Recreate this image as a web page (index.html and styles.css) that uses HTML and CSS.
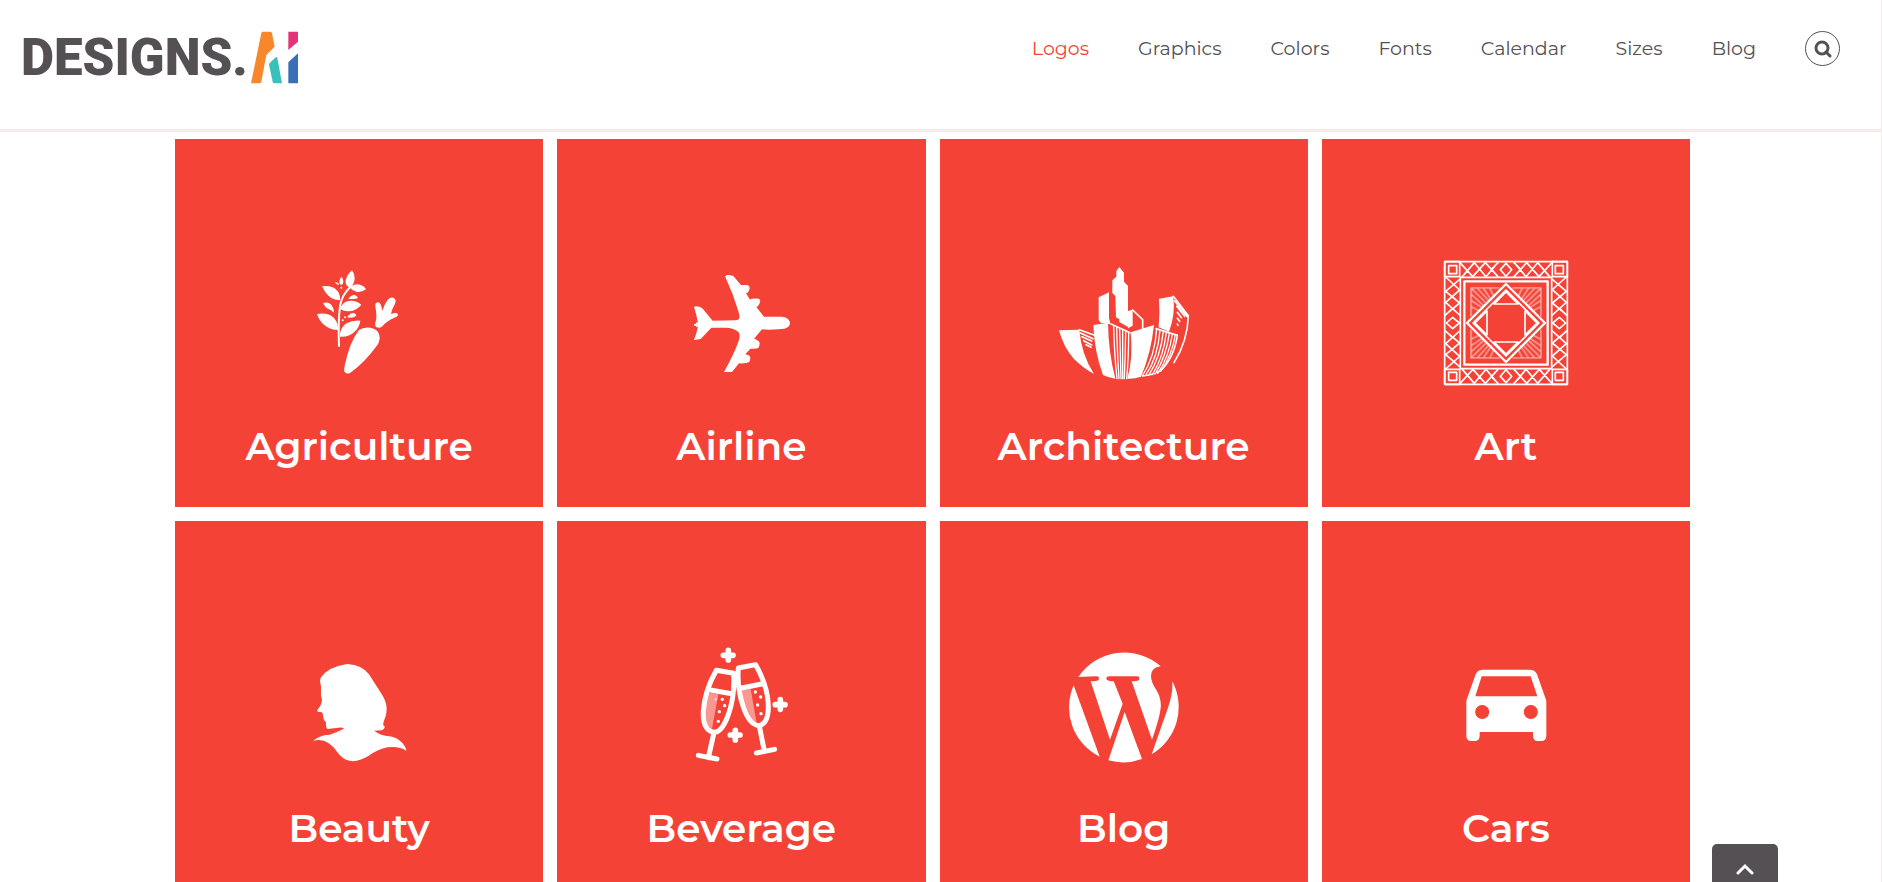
FILE: index.html
```html
<!DOCTYPE html>
<html lang="en">
<head>
  <meta charset="UTF-8">
  <title>Designs.ai - Logos</title>
  <link rel="stylesheet" href="styles.css">
</head>
<body>
  <header class="header">
    <a class="logo" href="#">
      <span class="logo-text">DESIGNS.</span>
      <svg class="logo-mark" viewBox="0 0 144 162" aria-hidden="true">
        <path fill="#f6882b" d="M3 157 34 6q1-4 5-4h21q5 0 6 4l8 41-25 25-15 80q-1 5-6 5z"/>
        <path fill="#38c0ba" d="M57 101q0-3 3-6l18-17q3-1 4 3l14 76H74q-5 0-6-5z"/>
        <path fill="#e23477" d="M115 2h29v30l-29 25z"/>
        <path fill="#396fb7" d="M115 94l29-27v90h-29z"/>
      </svg>
    </a>
    <nav class="nav">
      <a class="active" href="#">Logos</a>
      <a href="#">Graphics</a>
      <a href="#">Colors</a>
      <a href="#">Fonts</a>
      <a href="#">Calendar</a>
      <a href="#">Sizes</a>
      <a href="#">Blog</a>
      <button class="search" type="button" aria-label="Search">
        <svg viewBox="0 0 18 18"><circle cx="8" cy="8" r="6"/><path d="M12 12l4 4"/></svg>
      </button>
    </nav>
  </header>

  <main class="grid">
    <a class="tile" href="#">
      <svg viewBox="-9 3 432 432">
        <g class="line" stroke-width="6"><path d="M147 288q-3-70 3-120 6-35 32-58"/></g>
        <path d="M186 61q-21 18-19 38 2 10 11 13 16-8 16-27 0-14-8-24zM178 112q15-12 32-8 12 3 18 13-12 11-27 9-12-2-23-14zM96 109q28-4 43 10 13 12 11 31-18 2-34-12-12-11-20-29zM150 177q8-22 26-24 20-4 38 11-14 18-36 20-16 1-28-7zM81 192q34-5 51 12 13 15 12 36-24 0-41-15-16-13-22-33zM149 260q1-29 21-40 17-10 41-8-3 21-18 34-18 17-44 14z"/>
        <path d="M154 80q-8 12-5 22 6 5 10-1 3-12-5-21zM134 96q6 9 13 10l-2-7zM175 146q9-12 19-11 8 3 10 9-9 5-29 2zM99 159q17-6 27 8 6 8 6 21-8-8-15-10-10-3-18-19zM171 202q8-13 20-13 8 2 8 8-11 9-28 5z"/>
        <circle cx="154" cy="113" r="3"/><circle cx="158" cy="211" r="3"/><circle cx="165" cy="202" r="3"/>
        <path d="M207 240q14-10 34-7 28 5 28 30 0 14-12 29-33 45-74 75-9 7-17 1-6-4-2-20 14-71 43-108zM258 231q-5-5 0-20 3-15-2-41-2-12 8-13 9-1 13 26 6-21 16-34 9-9 19-5 8 7 3 17-10 17-12 31 13-4 18-2 6 5-1 10-30 12-42 28-7 8-20 3z"/>
      </svg>
      <span>Agriculture</span>
    </a>
    <a class="tile" href="#">
      <svg viewBox="-33 -27 432 432">
        <path d="M136 49q4-7 24-1l23 27h19q7 1 7 9-2 14-11 16l12 19q4-4 26-3 6 2 4 9-2 12-11 16l23 29h54q24 3 24 20-2 16-24 17l-38 2-22-1-24 28q14 4 17 12 0 11-4 16-5 3-24 2l-15 17q14 2 15 10 0 10-5 14-8 4-29 3l-21 26h-24q30-53 45-96 4-15-1-23-12-14-41-14H94l-32 34-20 3q7-19 12-40l-5 2v-4l-7-1v-5l7-1v-5l5 2q-4-22-12-48 12-4 25 5l31 37 69-1q10-1 11-7 1-8-3-20-15-52-39-103z"/>
      </svg>
      <span>Airline</span>
    </a>
    <a class="tile" href="#">
      <svg viewBox="6 -12 432 432">
        <path d="M27 226l61-2q6 74 44 133-32-17-60-45-32-36-45-86zM130 210l44-7q1 88 22 168-19-2-37-11-26-70-29-150zM146 127l31-15v78l5 18-30-5-6-8z"/>
        <path d="M187 76l12-11V48l9-12 14 17v27l12 13v123l-26-15v-8l-10-6-2-64-9-9z"/>
        <path d="M234 168l14-4v48l-14 8zM242 232l70-22q-9 85-39 155-19 7-41 6 18-61 10-139zM327 131l43-7q7 56-13 106l-31-13q4-45 1-86z"/>
        <g class="line" stroke-width="5">
          <path d="M88 224l46 17M91 234l38 17M96 245l29 13M101 257l24 13M108 269l15 8M248 165l30 29v27M370 124l45 58q-2 75-43 141M374 138l38 47M380 154l24 30M382 172l12 16M382 190l7 9M382 207l2 4M183 207l57 26M318 221l64 20q-11 71-53 108"/>
        </g>
        <g class="line" stroke-width="4">
          <path d="M191 212q2 87 10 159M200 216q2 83 7 155M209 221q2 78 4 150M218 224v147M227 228q-1 75-4 143M236 233q0 74-6 138M320 222q-5 83-43 141M330 226q-7 83-43 135M340 229q-8 76-44 132M349 232q-8 73-42 127M358 235q-10 72-43 122M367 237q-10 70-44 118M376 240q-11 63-44 109M277 363q30-2 54-16"/>
        </g>
      </svg>
      <span>Architecture</span>
    </a>
    <a class="tile" href="#">
      <svg viewBox="-3 -3 432 432">
        <defs>
          <g id="band">
            <path d="M29 29h45v45H29zM41 41h24v24H41z"/>
            <path d="M75 32l38 42 38-42 38 42M82 74l36-42 35 42 35-42M237 74l38-42 37 42 39-42M238 32l35 42 35-42 36 42M213 34l17 19-17 20-17-20zM189 32l-20 20 20 22M237 32l20 20-20 22"/>
          </g>
          <g id="rays">
            <path d="M192 108H108v84M110 110l42 42M128 110l34 37M146 110l23 34M165 110l12 24M110 128l37 34M110 146l34 23M110 165l24 12"/>
          </g>
        </defs>
        <g class="line" stroke-width="5">
          <use href="#band"/>
          <use href="#band" transform="rotate(90 213 213)"/>
          <use href="#band" transform="rotate(180 213 213)"/>
          <use href="#band" transform="rotate(270 213 213)"/>
          <path d="M29 29h368v368H29zM76 76h274v274H76z"/>
          <path d="M213 120l36 36h-72zM213 306l36-36h-72zM120 213l36-36v72zM306 213l-36-36v72zM213 114l99 99-99 99-99-99z"/>
        </g>
        <g class="line rays" stroke-width="4">
          <use href="#rays"/>
          <use href="#rays" transform="rotate(90 213 213)"/>
          <use href="#rays" transform="rotate(180 213 213)"/>
          <use href="#rays" transform="rotate(270 213 213)"/>
        </g>
        <g class="line" stroke-width="7"><path d="M88 88h250v250H88zM213 96l117 117-117 117L96 213z"/></g>
      </svg>
      <span>Art</span>
    </a>
    <a class="tile" href="#">
      <svg viewBox="-39 -51 432 432">
        <path d="M62 83q25-34 80-41 45 3 65 31l34 53q20 29 19 52 0 20-8 34-6 15 3 18-3 9-10 11l-23 1q21 15 46 17 22 2 39 20 12 14 12 23-22-14-57-10-27 5-57 26-34 20-56 14-22-4-38-27-24-34-54-35-13-1-19 5 17-20 51-21 18-6 43-18-4-5-16-3l-34 4q-5-4-4-20-9-8-9-23 0-6-6-8-15 0-11-6 14-16 14-33-4-6-3-25 1-15-3-28z"/>
      </svg>
      <span>Beauty</span>
    </a>
    <a class="tile" href="#">
      <svg viewBox="-33 -6 432 432">
        <g fill-opacity=".45">
          <path d="M88 173l27 5-19 104q-25-14-23-51 3-32 15-58zM184 166l28-4 19 109q-34-22-47-105z"/>
        </g>
        <g class="line" stroke-width="15">
          <path d="M109 106l52 9q4 70-17 127-19 51-42 50-35-7-32-64 4-60 39-122zM95 166l60 10M102 293l-17 75M55 361l56 11M175 99l52-10q38 68 38 127 0 48-27 56-28 0-47-53-21-60-16-120zM185 159l60-12M238 273l15 75M229 354l55-11"/>
        </g>
        <g class="line" stroke-width="17">
          <path d="M145 46v29M130 61h29M301 194v29M286 209h29M166 286v29M151 300h29"/>
        </g>
        <g><circle cx="127" cy="193" r="5"/><circle cx="107" cy="193" r="3"/><circle cx="134" cy="212" r="5"/><circle cx="118" cy="230" r="5"/><circle cx="115" cy="259" r="5"/><circle cx="226" cy="171" r="5"/><circle cx="242" cy="186" r="5"/><circle cx="233" cy="210" r="5"/><circle cx="243" cy="236" r="5"/></g>
      </svg>
      <span>Beverage</span>
    </a>
    <a class="tile" href="#">
      <svg viewBox="-9 -21 432 432">
        <path d="M70 111A165 165 0 0 1 317 79q-29 3-29 29 0 18 16 42 16 26 13 54-3 30-26 95l-61-175q23 0 23-8t-10-7h-79q-10 0-10 7t22 8l27 67-38 108-58-175q25 0 25-8t-10-7z"/>
        <path d="M56 136l78 214A165 165 0 0 1 56 136zM209 216l52 141a165 165 0 0 1-101 4zM352 124a165 165 0 0 1-62 219l50-143q14-40 12-76z"/>
      </svg>
      <span>Blog</span>
    </a>
    <a class="tile" href="#">
      <svg viewBox="-48 -51 432 432">
        <path fill-rule="evenodd" d="M99 59h140q17 0 22 14l28 79v105q0 16-16 16h-9q-15 0-15-16v-11H89v11q0 16-16 16h-9q-15 0-15-16V152l28-79q5-14 22-14zM95 79l-19 60h186l-20-60zM96 165a21 21 0 1 0 1 0zM242 165a21 21 0 1 0 1 0z"/>
      </svg>
      <span>Cars</span>
    </a>
  </main>

  <button class="to-top" type="button" aria-label="Back to top">
    <svg viewBox="0 0 18 12"><path d="M2 10l7-7 7 7"/></svg>
  </button>
</body>
</html>
```
FILE: styles.css
```css
* { box-sizing: border-box; }
body { margin: 0; height: 100vh; overflow: hidden; background: #fff; color: #545054; font-family: Montserrat, Inter, sans-serif; border-right: 1px solid #f5ebec; }
a { color: inherit; text-decoration: none; }

.header { display: flex; justify-content: space-between; align-items: flex-start; height: 132px; padding: 31px 41px 0 21px; border-bottom: 3px solid #f5ebec; }
.logo { display: flex; align-items: center; justify-content: space-between; width: 277px; }
.logo-text { font: 900 51px/54px Roboto, sans-serif; }
.logo-mark { width: 48px; height: 54px; }
.nav { display: flex; align-items: center; gap: 49px; font-size: 19px; line-height: 35px; }
.nav .active { color: #f44336; }
.search { display: flex; align-items: center; justify-content: center; width: 35px; height: 35px; padding: 0; border: 1px solid #545054; border-radius: 50%; background: none; cursor: pointer; }
.search svg { width: 18px; height: 18px; fill: none; stroke: #545054; stroke-width: 3; stroke-linecap: round; }

.grid { display: grid; grid-template-columns: repeat(4, 1fr); gap: 14px; margin: 7px 191px 0 175px; }
.tile { display: flex; flex-direction: column; align-items: center; aspect-ratio: 1; padding-top: 112px; background: #f44336; color: #fff; }
.tile svg { width: 144px; height: 144px; fill: #fff; }
.tile span { margin-top: 27px; font-size: 39px; font-weight: 600; line-height: 48px; }
.tile .line { fill: none; stroke: #fff; stroke-linecap: round; stroke-linejoin: round; }
.tile .rays { opacity: 0.6; }

.to-top { position: fixed; right: 104px; bottom: 0; display: flex; align-items: center; justify-content: center; width: 66px; height: 38px; padding: 12px 0 0; border: none; border-radius: 5px 5px 0 0; background: #545054; cursor: pointer; }
.to-top svg { width: 18px; height: 12px; fill: none; stroke: #fff; stroke-width: 3; stroke-linecap: round; }
```
